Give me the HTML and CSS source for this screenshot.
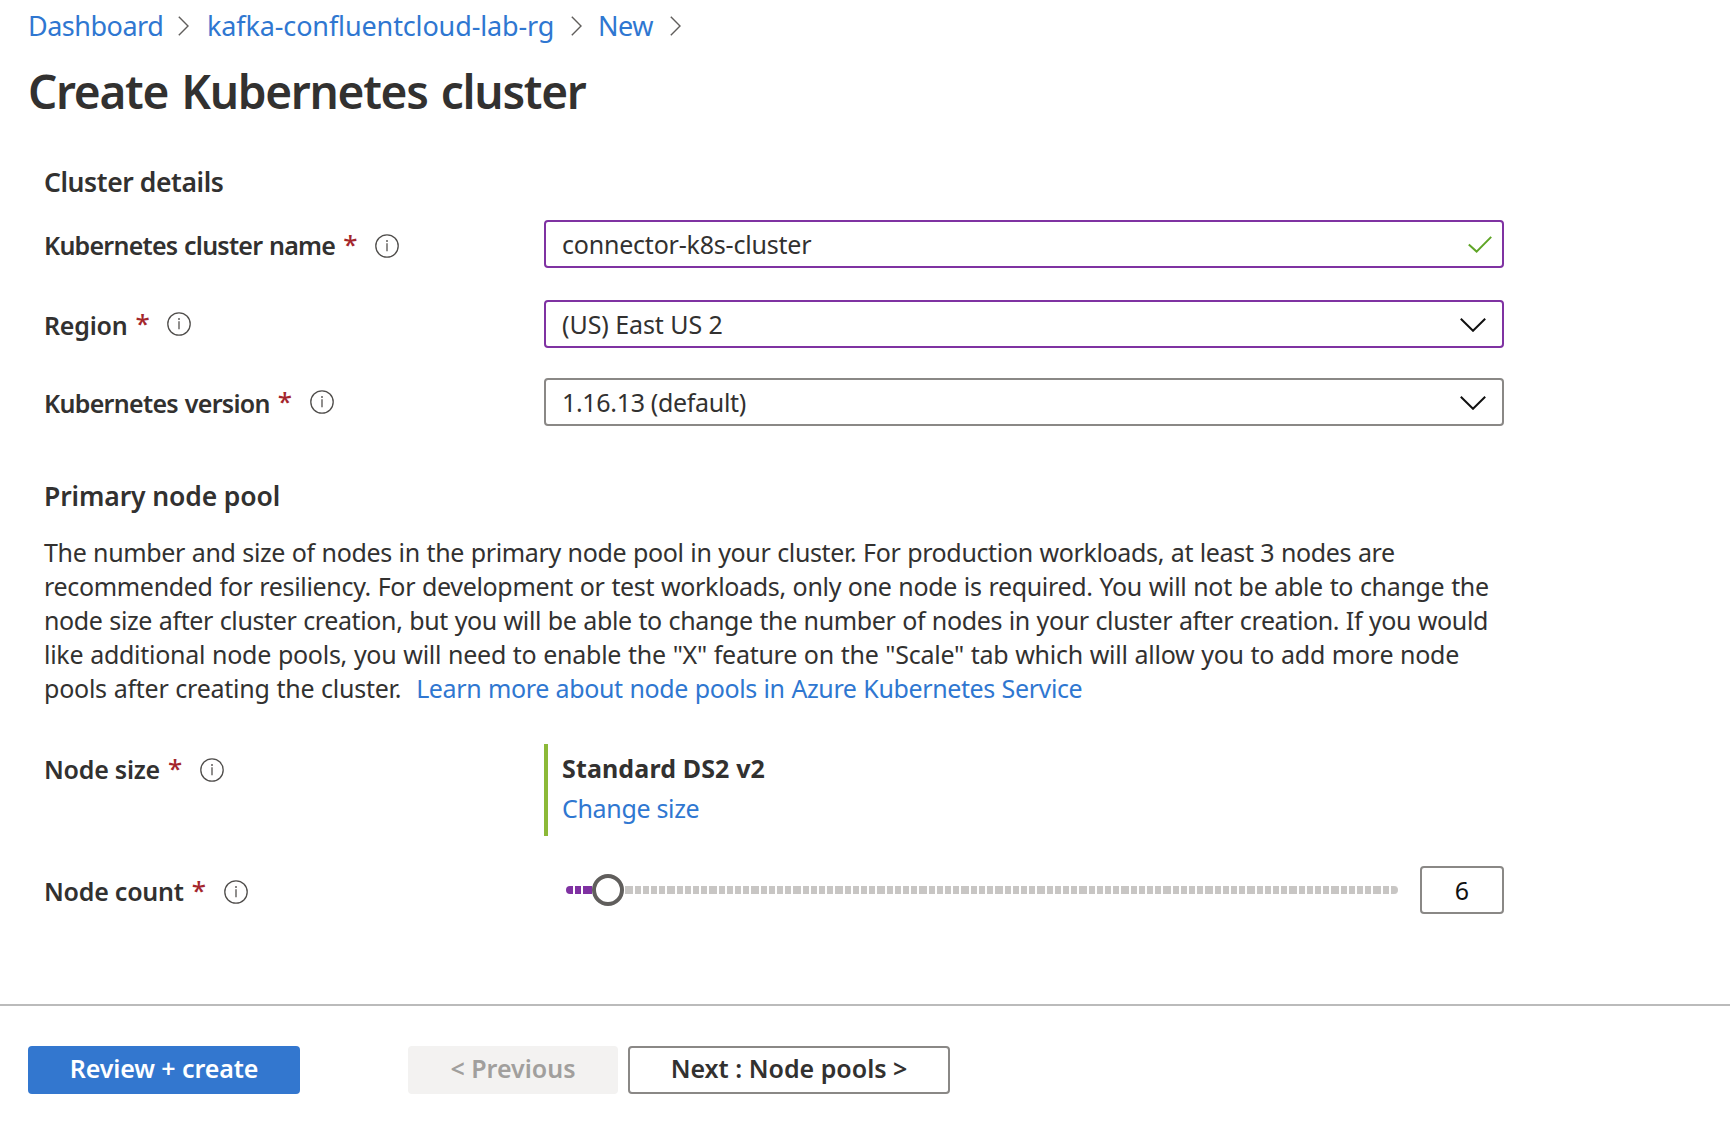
FILE: index.html
```html
<!DOCTYPE html>
<html lang="en">
<head>
<meta charset="utf-8">
<title>Create Kubernetes cluster</title>
<link rel="stylesheet" href="styles.css">
</head>
<body>
<svg class="defs" aria-hidden="true">
  <symbol id="info" viewBox="0 0 24 24">
    <circle cx="12" cy="12" r="11.2" fill="none" stroke="#504e4c" stroke-width="1.3"/>
    <path d="M12 9.2v8" stroke="#605e5c" stroke-width="1.4"/>
    <circle cx="12" cy="7" r="1" fill="#605e5c"/>
  </symbol>
  <symbol id="crumb" viewBox="0 0 11 20">
    <path d="M.8.8 10 10 .8 19.2" fill="none" stroke="#605e5c" stroke-width="1.4"/>
  </symbol>
  <symbol id="down" viewBox="0 0 26 14">
    <path d="M.8.8 13 12.8 25.2.8" fill="none" stroke="#111" stroke-width="2"/>
  </symbol>
</svg>

<header class="header">
  <nav class="breadcrumb">
    <a class="crumb-dashboard" href="#">Dashboard</a>
    <svg class="crumb-sep"><use href="#crumb"/></svg>
    <a class="crumb-group" href="#">kafka-confluentcloud-lab-rg</a>
    <svg class="crumb-sep"><use href="#crumb"/></svg>
    <a class="crumb-new" href="#">New</a>
    <svg class="crumb-sep"><use href="#crumb"/></svg>
  </nav>
  <h1 class="title">Create Kubernetes cluster</h1>
</header>

<main class="form">
  <h2 class="section section-details">Cluster details</h2>

  <div class="row row-name">
    <div class="label"><span class="label-name">Kubernetes cluster name</span><span class="req">*</span><svg class="info"><use href="#info"/></svg></div>
    <div class="field active">
      <span class="value-name">connector-k8s-cluster</span>
      <svg class="check" viewBox="0 0 24 17"><path d="M.8 8.6 8.6 15.6 23.2.9" fill="none" stroke="#5fa526" stroke-width="2"/></svg>
    </div>
  </div>
  <div class="row row-region">
    <div class="label raised"><span class="label-region">Region</span><span class="req">*</span><svg class="info"><use href="#info"/></svg></div>
    <div class="field active">
      <span class="value-region">(US) East US 2</span>
      <svg class="down"><use href="#down"/></svg>
    </div>
  </div>
  <div class="row row-version">
    <div class="label raised"><span class="label-version">Kubernetes version</span><span class="req">*</span><svg class="info"><use href="#info"/></svg></div>
    <div class="field">
      <span class="value-version">1.16.13 (default)</span>
      <svg class="down"><use href="#down"/></svg>
    </div>
  </div>

  <h2 class="section section-pool">Primary node pool</h2>
  <p class="intro">
    <span class="line line-1">The number and size of nodes in the primary node pool in your cluster. For production workloads, at least 3 nodes are</span>
    <span class="line line-2">recommended for resiliency. For development or test workloads, only one node is required. You will not be able to change the</span>
    <span class="line line-3">node size after cluster creation, but you will be able to change the number of nodes in your cluster after creation. If you would</span>
    <span class="line line-4">like additional node pools, you will need to enable the "X" feature on the "Scale" tab which will allow you to add more node</span>
    <span class="line line-5"><span>pools after creating the cluster.</span><a class="learn" href="#">Learn more about node pools in Azure Kubernetes Service</a></span>
  </p>

  <div class="row row-size">
    <div class="label"><span class="label-node">Node size</span><span class="req">*</span><svg class="info"><use href="#info"/></svg></div>
    <div class="size">
      <strong class="size-name">Standard DS2 v2</strong>
      <a class="size-link" href="#">Change size</a>
    </div>
  </div>
  <div class="row row-count">
    <div class="label"><span class="label-node">Node count</span><span class="req">*</span><svg class="info"><use href="#info"/></svg></div>
    <div class="count">
      <div class="slider">
        <div class="filled"><i></i><i></i><i></i></div>
        <div class="thumb"></div>
        <div class="ticks ticks-a"></div>
        <div class="ticks ticks-b"></div>
      </div>
      <div class="number">6</div>
    </div>
  </div>
</main>

<footer class="footer">
  <button class="btn primary">Review + create</button>
  <button class="btn previous" disabled>&lt; Previous</button>
  <button class="btn next">Next : Node pools &gt;</button>
</footer>
</body>
</html>
```
FILE: styles.css
```css
* { box-sizing: border-box; }

body {
  margin: 0;
  height: 1136px;
  overflow: hidden;
  display: flex;
  flex-direction: column;
  background: #fff;
  color: #323130;
  font: 25px/48px "Noto Sans", "Open Sans", sans-serif;
  white-space: nowrap;
}

a { color: #2f77d1; text-decoration: none; }
svg { display: block; flex: none; }
.defs { display: none; }

/* Header */
.header { padding: 6px 0 0 28px; }

.breadcrumb {
  display: flex;
  align-items: flex-start;
  height: 40px;
  font-size: 27px;
  line-height: 40px;
}
.crumb-dashboard { width: 150px; letter-spacing: -.5px; }
.crumb-group { width: 364px; margin-left: 18px; letter-spacing: -.13px; }
.crumb-new { width: 72px; margin-left: 16px; letter-spacing: -.45px; }
.crumb-sep { width: 11px; height: 20px; margin-top: 10px; }

.title {
  margin: 15px 0 0;
  font-size: 46px;
  font-weight: 600;
  line-height: 60px;
  letter-spacing: -1.3px;
  word-spacing: 2.6px;
}

/* Form */
.form { width: 1504px; height: 883px; padding-left: 44px; }

.section {
  margin: 0;
  font-size: 26.5px;
  font-weight: 600;
  line-height: 36px;
}
.section-details { margin-top: 43px; letter-spacing: -.4px; }
.section-pool { margin-top: 52px; letter-spacing: -.12px; }

.row { display: flex; }
.row-name { margin-top: 20px; }
.row-region { margin-top: 32px; }
.row-version { margin-top: 30px; }
.row-size { margin-top: 39px; }
.row-count { margin-top: 30px; }

.label {
  display: flex;
  flex: 0 0 500px;
  height: 48px;
  padding-top: 1px;
  font-weight: 600;
}
.label-name { letter-spacing: -.76px; word-spacing: 1px; }
.label-region { letter-spacing: -.22px; }
.label-version { letter-spacing: -.7px; word-spacing: 1px; }
.label-node { letter-spacing: -.24px; }
.req {
  width: 14px;
  margin: -1px 0 0 8px;
  color: #a4262c;
  font-size: 26px;
  font-weight: 500;
}
.info { width: 24px; height: 24px; margin: 13px 0 0 18px; }
.raised .req { margin-top: -2px; }
.raised .info { margin-top: 11px; }

.field {
  display: flex;
  flex: 1;
  align-items: center;
  justify-content: space-between;
  height: 48px;
  padding: 0 16px;
  border: 2px solid #8a8886;
  border-radius: 4px;
  line-height: 44px;
}
.field.active { border-color: #7f32a2; }
.value-name { letter-spacing: -.21px; }
.value-region { letter-spacing: -.07px; }
.value-version { letter-spacing: -.325px; }
.check { width: 24px; height: 17px; margin-right: -6px; }
.down { width: 26px; height: 14px; margin-top: 2px; }

.intro { margin: 21px 0 0; line-height: 34px; }
.line { display: block; height: 34px; word-spacing: .6px; }
.line-1 { letter-spacing: -.36px; }
.line-2 { letter-spacing: -.325px; }
.line-3 { letter-spacing: -.375px; }
.line-4 { letter-spacing: -.265px; }
.line-5 { letter-spacing: -.25px; }
.learn { margin-left: 15px; letter-spacing: -.38px; }

.size {
  display: flex;
  flex-direction: column;
  height: 92px;
  padding: 4px 0 0 14px;
  border-left: 4px solid #8cb938;
  line-height: 40px;
}
.size-name { letter-spacing: .13px; }
.size-link { letter-spacing: -.33px; }

/* Slider */
.count {
  display: flex;
  flex: 1;
  justify-content: space-between;
  padding-left: 22px;
}
.slider { display: flex; align-items: center; height: 48px; }
.filled { display: flex; width: 26px; height: 8px; }
.filled i { width: 6px; background: #7f32a2; }
.filled i:nth-child(1) { width: 7px; margin-right: 2px; border-radius: 4px 0 0 4px; }
.filled i:nth-child(2) { margin-right: 2px; }
.filled i:nth-child(3) { width: 9px; }
.thumb {
  width: 32px;
  height: 32px;
  margin-right: 1px;
  border: 4px solid #605e5c;
  border-radius: 50%;
}
.ticks {
  height: 8px;
  background: repeating-linear-gradient(90deg,
    #c8c6c4 0 8px, #fff 8px 10px,
    #c8c6c4 10px 16px, #fff 16px 18px,
    #c8c6c4 18px 24px, #fff 24px 26px,
    #c8c6c4 26px 32px, #fff 32px 34px,
    #c8c6c4 34px 40px, #fff 40px 42px);
}
.ticks-a { width: 370px; }
.ticks-b {
  width: 403px;
  border-right: 1px solid #c8c6c4;
  border-radius: 0 4px 4px 0;
}

.number {
  width: 84px;
  height: 48px;
  border: 2px solid #8a8886;
  border-radius: 4px;
  color: #111;
  line-height: 44px;
  text-align: center;
}

/* Footer */
.footer {
  display: flex;
  height: 132px;
  padding: 40px 28px 0;
  border-top: 2px solid #bbb;
}
.btn {
  height: 48px;
  padding: 0 0 4px;
  border: 0;
  border-radius: 4px;
  color: #323130;
  font: 600 25px/44px "Noto Sans", "Open Sans", sans-serif;
}
.primary { width: 272px; background: #3377cf; color: #fff; letter-spacing: -.1px; }
.previous {
  width: 210px;
  margin-left: 108px;
  background: #f3f2f1;
  color: #a19f9d;
}
.next {
  width: 322px;
  margin-left: 10px;
  border: 2px solid #8a8886;
  background: #fff;
  line-height: 40px;
}
```
